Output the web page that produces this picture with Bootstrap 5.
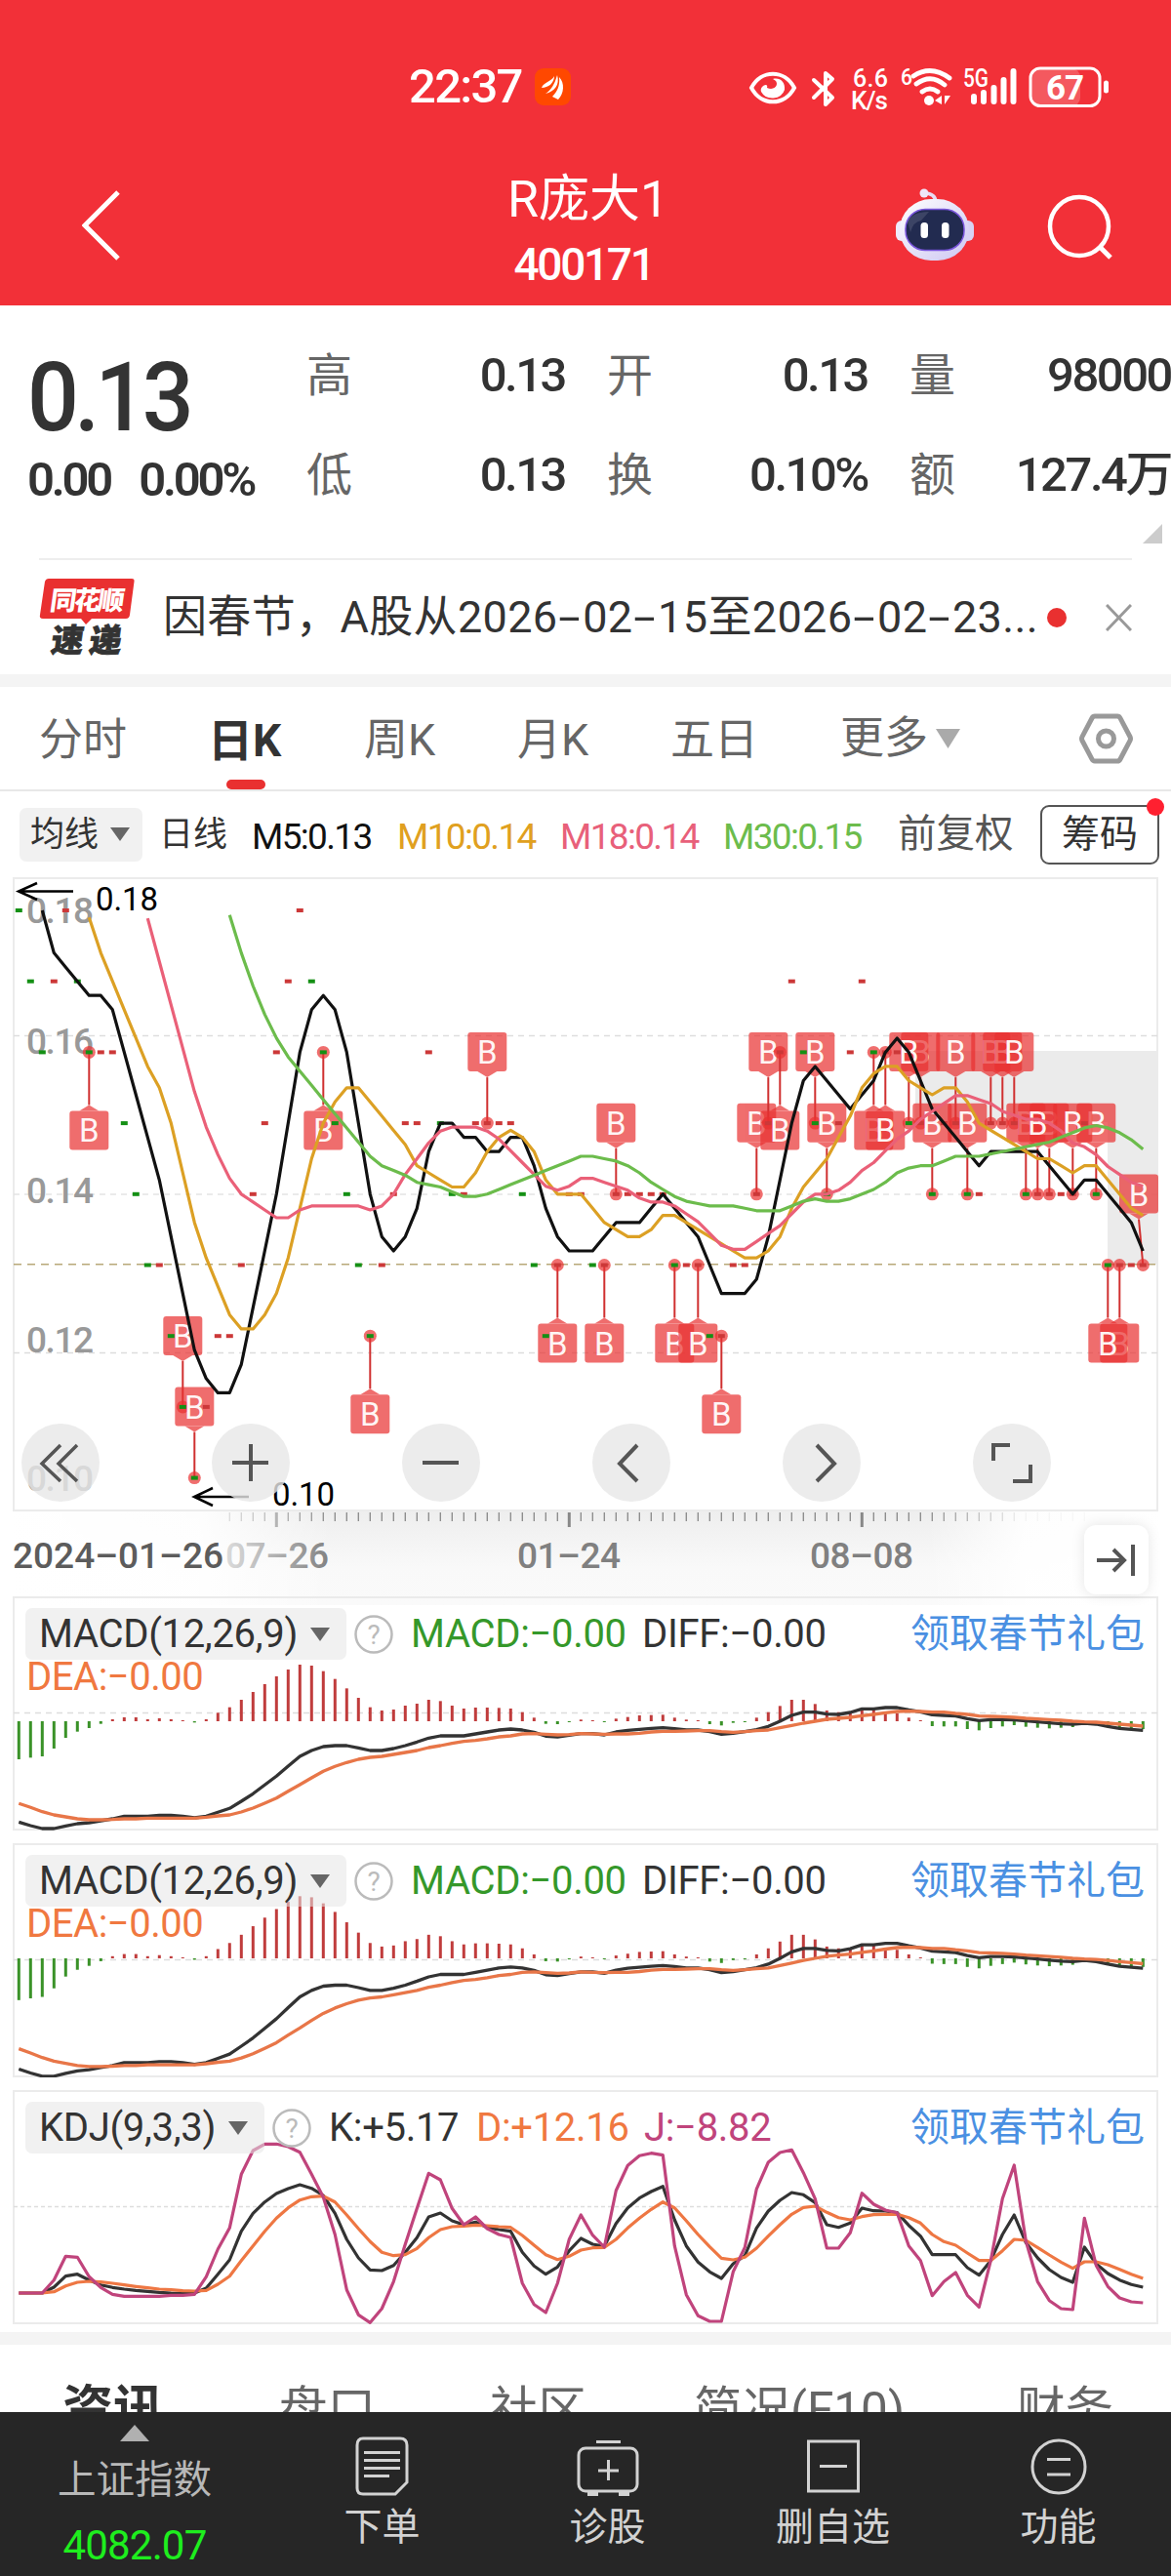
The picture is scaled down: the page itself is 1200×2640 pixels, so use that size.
<!DOCTYPE html>
<html lang="zh-CN">
<head>
  <meta charset="UTF-8">
  <meta name="viewport" content="width=device-width, initial-scale=1.0">
  <title>R庞大1 400171</title>
  <!-- Bootstrap CSS -->
  <link href="https://cdn.jsdelivr.net/npm/bootstrap@5.3.0/dist/css/bootstrap.min.css" rel="stylesheet">
  <style>
    body { width: 1200px; height: 2640px; margin: 0; overflow: hidden; background: #fff; color: #333; font-family: Roboto, "Noto Sans CJK SC", sans-serif; line-height: 1; white-space: nowrap; }
    svg { display: block; flex: none; }
    svg text { font-family: Roboto, "Noto Sans CJK SC", sans-serif; }
    .digits { font-weight: 500; letter-spacing: -.05em; }

    .app-head { height: 313px; background: #f23038; color: #fff; }
    .status-row { height: 90px; margin-top: 44px; padding-left: 419px; }
    .clock { font-size: 49px; line-height: 60px; letter-spacing: -.035em; width: 129px; }
    .status-icons { margin-left: 179px; }
    .title-row { height: 146px; padding: 0 60px 0 84px; margin-top: 16px; }
    .stock-name { font-size: 52px; height: 70px; line-height: 70px; }
    .stock-code { font-size: 46px; height: 50px; line-height: 50px; letter-spacing: -.05em; font-weight: 500; margin-top: 6px; }
    .title-mid { margin-left: 397px; width: 156px; padding-top: 20px; }
    .robot { margin-left: 242px; }
    .search-icon { margin-left: 75px; }

    .quote { height: 259px; padding-top: 20px; }
    .quote-left { width: 314px; padding-left: 28px; }
    .price { font-size: 98px; height: 108px; line-height: 108px; margin-top: 21px; transform: scaleX(.95); transform-origin: left; }
    .change { font-size: 49px; height: 60px; line-height: 60px; gap: 29px; letter-spacing: -.065em; }
    .quote-grid { display: grid; grid-template-columns: 265px 267px 268px; column-gap: 43px; grid-auto-rows: 102px; }
    .quote-grid > div { font-size: 49px; }
    .quote-grid .lbl { color: #666; font-size: 47px; }
    .corner { width: 0; height: 0; border-left: 20px solid transparent; border-bottom: 20px solid #ccc; margin: 0 9px 0 auto; }

    .news { height: 119px; margin: 0 40px; border-top: 2px solid #eee; }
    .news-text { font-size: 45px; margin-left: 27px; width: 907px; letter-spacing: .008em; }
    .news-text i { display: inline-block; width: .57em; text-align: center; font-style: normal; transform: scaleX(1.8); }
    .red-dot { width: 20px; height: 20px; background: #e93030; margin-left: -1px; }
    .band { height: 13px; background: #f4f4f4; }

    .period-tabs { height: 107px; border-bottom: 2px solid #e8e8e8; color: #666; font-size: 45px; padding-left: 40px; }
    .period-tabs > div { height: 106px; line-height: 110px; }
    .period-on { color: #333; font-weight: 700; font-size: 46px; position: relative; }
    .period-on::after { content: ""; position: absolute; left: 19px; bottom: 1px; width: 40px; height: 10px; border-radius: 5px; background: #e93030; }

    .ma-row { height: 88px; padding-left: 20px; font-size: 37px; }
    .chip { background: rgba(230, 230, 230, .55); border-radius: 7px; color: #333; }
    .ma-chip { width: 126px; height: 55px; padding-left: 11px; font-size: 35px; gap: 12px; }
    .ma-val { letter-spacing: -.045em; padding-top: 4px; }
    .chips-btn { width: 122px; height: 61px; border: 2px solid #555; border-radius: 9px; font-size: 39px; position: relative; }
    .chips-btn::after { content: ""; position: absolute; right: -7px; top: -9px; width: 18px; height: 18px; border-radius: 50%; background: #ff2030; }

    .panel { position: relative; margin: 0 13px; border: 2px solid #ebebeb; }
    .panel > svg { position: absolute; left: -15px; top: -2px; }
    .k-panel { height: 650px; }
    .tools { position: absolute; left: 7px; bottom: 8px; gap: 115px; }
    .tool-btn { width: 80px; height: 80px; background: rgba(231, 231, 231, .8); border-radius: 50%; }

    .axis { height: 87px; position: relative; }
    .end-btn { position: absolute; left: 1111px; top: 14px; width: 66px; height: 71px; background: #fff; border-radius: 12px; box-shadow: 0 0 14px rgba(0, 0, 0, .1); z-index: 2; }

    .sub-panel { height: 240px; margin-bottom: 13px; }
    .legend { position: relative; padding: 10px 12px 0 11px; font-size: 40px; letter-spacing: -.008em; }
    .legend > div { height: 53px; }
    .legend .chip { padding: 0 17px 0 14px; gap: 13px; }
    .legend .gift { color: #4a90e2; font-size: 40px; letter-spacing: 0; }
    .dea { position: relative; color: #f07840; font-size: 40px; padding-left: 12px; letter-spacing: -.012em; height: 36px; line-height: 36px; }
    .green { color: #35982a; }
    .orange { color: #f07840; }
    .pink { color: #c0447c; }

    .info-tabs { height: 69px; overflow: hidden; color: #666; font-size: 49.5px; }
    .info-tabs div { line-height: 134px; height: 134px; }

    .foot { height: 169px; background: #262626; color: #d2d2d2; font-size: 39px; }
    .foot-index { width: 276px; color: #b8b8b8; font-size: 39.5px; }
    .foot-cell { width: 231px; padding-top: 24px; }
    .foot-cell div { margin-top: 11px; }
    .foot-num { color: #1eee1e; font-size: 42px; letter-spacing: -.02em; }
  </style>
</head>
<body>
  <header class="app-head d-flex flex-column">
    <div class="status-row d-flex align-items-center">
      <div class="clock digits">22:37</div>
      <svg width="37" height="38" viewBox="0 0 37 38"><rect width="37" height="38" rx="9" fill="#ff4800"/><path d="M7 20C9 14 17 14 20 8C20 15 14 20 7 20ZM11 26C17 22 20 17 23 7C26 17 20 24 11 26ZM18 29C23 24 26 18 25 9C31 15 30 26 24 32Z" fill="#fff"/></svg>
      <svg class="status-icons" width="375" height="50" viewBox="0 0 375 50" fill="none" stroke="#fff">
        <!-- eye -->
        <path d="M6 26C16 7 40 7 50 26C40 45 16 45 6 26Z" stroke-width="4"/>
        <path d="M28 17C36 20 31 30 22 26C24 20 14 24 16 30A13 12 0 0 0 40 28C41 20 35 15 28 17Z" fill="#fff" stroke="none"/>
        <!-- bluetooth -->
        <path d="M70 18L89 36L82 43V11L89 17L70 36" stroke-width="4" stroke-linejoin="round" stroke-linecap="round"/>
        <!-- wifi -->
        <path d="M172 14Q190 2 209 16M175 22Q190 11 204 23M181 30Q189 24 197 30" stroke-width="4.800" stroke-linecap="round"/>
        <circle cx="188" cy="39" r="5" fill="#fff" stroke="none"/>
        <path d="M201 34v9l-7-4zM204 34v9l6-9z" fill="#fff" stroke="none"/>
        <!-- signal -->
        <path d="M234 35V40M244 31V40M254.500 26V40M264.500 18V40M274.500 9V40" stroke-width="6" stroke-linecap="round"/>
        <!-- battery -->
        <rect x="292" y="6" width="51" height="39" rx="9" fill="#fff" fill-opacity=".2" stroke="none"/>
        <rect x="292" y="6" width="71" height="38.500" rx="10" stroke-width="3"/>
        <path d="M369.500 21v8" stroke-width="5" stroke-linecap="round"/>
        <g fill="#fff" stroke="none">
          <text x="110" y="24.500" font-size="25" font-weight="500" textLength="36">6.6</text>
          <text x="108" y="47.500" font-size="26" font-weight="500" textLength="38">K/s</text>
          <text x="159" y="23" font-size="24" font-weight="500" textLength="12" lengthAdjust="spacingAndGlyphs">6</text>
          <text x="223" y="25" font-size="25" font-weight="500" textLength="26" lengthAdjust="spacingAndGlyphs">5G</text>
          <text x="308" y="38" font-size="35" font-weight="700" textLength="39">67</text>
        </g>
      </svg>
    </div>
    <div class="title-row d-flex align-items-start">
      <svg width="39" height="72" viewBox="0 0 39 72" style="margin-top: 45px"><path d="M37 2L3 36L37 70" fill="none" stroke="#fff" stroke-width="5"/></svg>
      <div class="title-mid text-center">
        <div class="stock-name">R庞大1</div>
        <div class="stock-code">400171</div>
      </div>
      <svg class="robot" width="80" height="75" viewBox="0 0 80 75" style="margin-top: 43px">
        <defs><linearGradient id="head" x1="0" y1="0" x2="1" y2="1"><stop offset="0" stop-color="#fff"/><stop offset="1" stop-color="#cdc6f2"/></linearGradient></defs>
        <path d="M29 5Q41 5 41 15" fill="none" stroke="#e8dcf4" stroke-width="3.500"/><circle cx="29" cy="5" r="4.500" fill="#efe6f8"/>
        <rect x="0" y="33" width="14" height="21" rx="6" fill="#eeeafc"/><rect x="66" y="33" width="14" height="21" rx="6" fill="#d8d2f4"/>
        <rect x="4" y="11" width="71" height="63" rx="32" fill="url(#head)"/>
        <rect x="10" y="21.500" width="60" height="42" rx="20" fill="#222b50" stroke="#7a56dc" stroke-width="1.500"/>
        <path d="M12 34Q17 24 34 24L26 33Q18 34 15 45Z" fill="#fff" opacity=".12"/>
        <rect x="25.500" y="35" width="7.500" height="16" rx="3.500" fill="#fff"/><rect x="47" y="35" width="7.500" height="16" rx="3.500" fill="#fff"/>
      </svg>
      <svg class="search-icon" width="70" height="70" viewBox="0 0 70 70" fill="none" stroke="#fff" stroke-width="4.500" style="margin-top: 49px"><circle cx="33" cy="33" r="30"/><path d="M54 54L65 65" stroke-width="5"/></svg>
    </div>
  </header>

  <section class="quote">
    <div class="d-flex">
      <div class="quote-left">
        <div class="price digits">0.13</div>
        <div class="change fw-semibold d-flex"><span>0.00</span><span>0.00%</span></div>
      </div>
      <div class="quote-grid">
        <div class="d-flex justify-content-between align-items-center"><span class="lbl">高</span><span class="digits">0.13</span></div>
        <div class="d-flex justify-content-between align-items-center"><span class="lbl">开</span><span class="digits">0.13</span></div>
        <div class="d-flex justify-content-between align-items-center"><span class="lbl">量</span><span class="digits">98000</span></div>
        <div class="d-flex justify-content-between align-items-center"><span class="lbl">低</span><span class="digits">0.13</span></div>
        <div class="d-flex justify-content-between align-items-center"><span class="lbl">换</span><span class="digits">0.10%</span></div>
        <div class="d-flex justify-content-between align-items-center"><span class="lbl">额</span><span class="digits">127.4万</span></div>
      </div>
    </div>
    <div class="corner"></div>
  </section>

  <section class="news d-flex align-items-center">
    <svg width="100" height="82" viewBox="0 0 100 82">
      <path d="M10 1H95Q98 1 97.500 4L93 38Q92.500 42 89 42H54L48 48L43 42H4Q0 42 1 38L6 4Q7 1 10 1Z" fill="#e93030"/>
      <g transform="skewX(-8)" font-weight="900">
        <text x="15" y="33" font-size="27" fill="#fff" textLength="76">同花顺</text>
        <text x="22" y="76.500" font-size="33" fill="#333" stroke="#333" stroke-width=".8" textLength="72">速递</text>
      </g>
    </svg>
    <div class="news-text">因春节，A股从2026<i>-</i>02<i>-</i>15至2026<i>-</i>02<i>-</i>23...</div>
    <div class="red-dot rounded-circle"></div>
    <svg class="ms-auto" width="27" height="28" viewBox="0 0 27 28"><path d="M1 1L26 27M26 1L1 27" stroke="#999" stroke-width="3"/></svg>
  </section>
  <div class="band"></div>

  <nav class="period-tabs d-flex">
    <div style="width: 173px">分时</div>
    <div class="period-on" style="width: 160px">日K</div>
    <div style="width: 157px">周K</div>
    <div style="width: 157px">月K</div>
    <div style="width: 174px">五日</div>
    <div class="d-flex align-items-center" style="width: 245px">更多<svg class="ms-2" width="25" height="20"><path d="M0 0H25L12.500 20Z" fill="#aaa"/></svg></div>
    <div class="d-flex align-items-center"><svg width="55" height="52" viewBox="0 0 55 52" fill="none" stroke="#999" stroke-width="5"><path d="M16 3H39Q41 3 42 5L52 24Q53 26 52 28L42 47Q41 49 39 49H16Q14 49 13 47L3 28Q2 26 3 24L13 5Q14 3 16 3Z"/><circle cx="27.500" cy="26" r="8"/></svg></div>
  </nav>

  <section class="ma-row d-flex align-items-center">
    <div class="chip ma-chip d-flex align-items-center">均线<svg width="20" height="14"><path d="M0 0H20L10 14Z" fill="#666"/></svg></div>
    <div style="width: 95px; margin-left: 17px; font-size: 35px">日线</div>
    <div class="ma-val" style="width: 149px; color: #111">M5:0.13</div>
    <div class="ma-val" style="width: 167px; color: #e0a020">M10:0.14</div>
    <div class="ma-val" style="width: 167px; color: #e8607a">M18:0.14</div>
    <div class="ma-val" style="width: 179px; color: #6cbc4c">M30:0.15</div>
    <div style="width: 146px; font-size: 39.500px; color: #555">前复权</div>
    <div class="chips-btn d-flex align-items-center justify-content-center">筹码</div>
  </section>

  <section class="panel k-panel">
    <svg id="kChart" width="1200" height="650" viewBox="0 899 1200 650"></svg>
    <div class="tools d-flex">
      <div class="tool-btn"><svg width="80" height="80" fill="none" stroke="#555" stroke-width="3.500"><path d="M40 22L21 41L40 59M57 22L38 41L57 59"/></svg></div>
      <div class="tool-btn"><svg width="80" height="80" fill="none" stroke="#555" stroke-width="4"><path d="M21 40H58M40 21V59"/></svg></div>
      <div class="tool-btn"><svg width="80" height="80" fill="none" stroke="#555" stroke-width="4"><path d="M21 40H58"/></svg></div>
      <div class="tool-btn"><svg width="80" height="80" fill="none" stroke="#555" stroke-width="4"><path d="M46 22L28 41L46 59"/></svg></div>
      <div class="tool-btn"><svg width="80" height="80" fill="none" stroke="#555" stroke-width="4"><path d="M35 22L53 41L35 59"/></svg></div>
      <div class="tool-btn"><svg width="80" height="80" fill="none" stroke="#555" stroke-width="4"><path d="M21 38V22H38M41 59H59V42"/></svg></div>
    </div>
  </section>

  <section class="axis">
    <svg id="axisChart" width="1200" height="96" viewBox="0 1549 1200 96"></svg>
    <div class="end-btn d-flex align-items-center justify-content-center">
      <svg width="40" height="36" fill="none" stroke="#555" stroke-width="4"><path d="M0 18H28M17 7L28 18L17 29M37 2V34"/></svg>
    </div>
  </section>

  <section class="panel sub-panel">
    <svg id="macd1" width="1200" height="240" viewBox="0 1636 1200 240"></svg>
    <div class="legend d-flex">
      <div class="chip d-flex align-items-center" style="width: 329px"><span class="legend-name">MACD(12,26,9)</span><svg width="20" height="14"><path d="M0 0H20L10 14Z" fill="#666"/></svg></div>
      <div class="d-flex align-items-center ms-2"><svg width="40" height="40"><circle cx="20" cy="20" r="18.500" fill="none" stroke="#bbb" stroke-width="2.500"/><text x="20" y="30" font-size="28" fill="#bbb" text-anchor="middle">?</text></svg></div>
      <div class="green d-flex align-items-center" style="width: 237px; margin-left: 18px">MACD:−0.00</div>
      <div class="d-flex align-items-center">DIFF:−0.00</div>
      <div class="gift d-flex align-items-center ms-auto">领取春节礼包</div>
    </div>
    <div class="dea">DEA:−0.00</div>
  </section>

  <section class="panel sub-panel">
    <svg id="macd2" width="1200" height="240" viewBox="0 1889 1200 240"></svg>
    <div class="legend d-flex">
      <div class="chip d-flex align-items-center" style="width: 329px"><span class="legend-name">MACD(12,26,9)</span><svg width="20" height="14"><path d="M0 0H20L10 14Z" fill="#666"/></svg></div>
      <div class="d-flex align-items-center ms-2"><svg width="40" height="40"><circle cx="20" cy="20" r="18.500" fill="none" stroke="#bbb" stroke-width="2.500"/><text x="20" y="30" font-size="28" fill="#bbb" text-anchor="middle">?</text></svg></div>
      <div class="green d-flex align-items-center" style="width: 237px; margin-left: 18px">MACD:−0.00</div>
      <div class="d-flex align-items-center">DIFF:−0.00</div>
      <div class="gift d-flex align-items-center ms-auto">领取春节礼包</div>
    </div>
    <div class="dea">DEA:−0.00</div>
  </section>

  <section class="panel sub-panel mb-2">
    <svg id="kdj" width="1200" height="240" viewBox="0 2142 1200 240"></svg>
    <div class="legend d-flex">
      <div class="chip d-flex align-items-center" style="width: 245px"><span class="legend-name">KDJ(9,3,3)</span><svg width="20" height="14"><path d="M0 0H20L10 14Z" fill="#666"/></svg></div>
      <div class="d-flex align-items-center ms-2"><svg width="40" height="40"><circle cx="20" cy="20" r="18.500" fill="none" stroke="#bbb" stroke-width="2.500"/><text x="20" y="30" font-size="28" fill="#bbb" text-anchor="middle">?</text></svg></div>
      <div class="d-flex align-items-center" style="width: 151px; margin-left: 18px">K:+5.17</div>
      <div class="orange d-flex align-items-center" style="width: 172px">D:+12.16</div>
      <div class="pink d-flex align-items-center">J:−8.82</div>
      <div class="gift d-flex align-items-center ms-auto">领取春节礼包</div>
    </div>
  </section>
  <div class="band"></div>

  <nav class="info-tabs d-flex">
    <div class="fw-bold" style="width: 286px; padding-left: 64px; font-size: 52px; color: #333">资讯</div>
    <div style="width: 216px">盘口</div>
    <div style="width: 209px">社区</div>
    <div style="width: 331px">简况(F10)</div>
    <div>财务</div>
  </nav>

  <footer class="foot d-flex">
    <div class="foot-index d-flex flex-column align-items-center">
      <svg width="30" height="17" style="margin-top: 13px"><path d="M0 17L15 0L30 17Z" fill="#b0b0b0"/></svg>
      <div style="margin-top: 20px">上证指数</div>
      <div class="foot-num" style="margin-top: 26px">4082.07</div>
    </div>
    <div class="foot-cell d-flex flex-column align-items-center">
      <svg width="64" height="64" fill="none" stroke="#d2d2d2" stroke-width="3"><path d="M12 3H50Q57 3 57 10V48L45 60H12Q6 60 6 54V10Q6 3 12 3Z"/><path d="M13 17.500H50M13 25.500H50M13 33.500H50M13 41.500H39"/></svg>
      <div>下单</div>
    </div>
    <div class="foot-cell d-flex flex-column align-items-center">
      <svg width="64" height="64" fill="none" stroke="#d2d2d2" stroke-width="3"><rect x="2" y="13" width="60" height="44" rx="7"/><path d="M20 6.500H45M22 36H43M32.500 25V46"/><path d="M11 60H22M43 60H54" stroke-width="4"/></svg>
      <div>诊股</div>
    </div>
    <div class="foot-cell d-flex flex-column align-items-center">
      <svg width="64" height="64" fill="none" stroke="#d2d2d2" stroke-width="3"><rect x="6.500" y="6" width="51" height="51"/><path d="M18 31.500H46"/></svg>
      <div>删自选</div>
    </div>
    <div class="foot-cell d-flex flex-column align-items-center">
      <svg width="64" height="64" fill="none" stroke="#d2d2d2" stroke-width="3"><circle cx="32" cy="32" r="27"/><path d="M20 24.500H44M20 40H44"/></svg>
      <div>功能</div>
    </div>
  </footer>

  <script>
    // closing prices in cents; the first 11 come before the visible window
    const before = [29, 28, 27, 26, 25, 24, 23, 22, 21, 20, 19];
    const closes = [18, 17, 16, 17, 18, 17, 16, 16, 16, 15, 14, 13, 13, 12, 11, 10, 11, 12, 12, 13, 14, 15, 16, 17, 18, 17, 16, 15, 14, 13, 12, 13, 14, 15, 15, 16, 15, 14, 14, 15, 15, 15, 15, 14, 13, 12, 13, 14, 14, 13, 13, 14, 14, 14, 14, 14, 13, 13, 13, 12, 12, 13, 13, 14, 15, 16, 17, 16, 15, 14, 15, 16, 17, 16, 16, 16, 15, 15, 14, 15, 15, 14, 14, 15, 15, 15, 14, 14, 14, 14, 14, 15, 14, 13, 13, 13, 13];
    const all = before.concat(closes);

    const px = i => 19.3 + 12 * i;
    const py = v => 933 + (18 - v) * 72.7;
    const line = (pts, color, w) => `<polyline points="${pts.map(p => p[0].toFixed(1) + ',' + p[1].toFixed(1)).join(' ')}" fill="none" stroke="${color}" stroke-width="${w}" stroke-linejoin="round"/>`;
    const dashed = (y, color, d) => `<path d="M14 ${y}H1187" stroke="${color}" stroke-width="1.5" stroke-dasharray="${d}"/>`;

    function average(n, first, color) {
      const pts = [];
      for (let i = first; i < closes.length; i++) {
        const part = all.slice(i + 12 - n, i + 12);
        pts.push([px(i), py(part.reduce((a, b) => a + b, 0) / n)]);
      }
      return line(pts, color, 3.2);
    }

    function marker(i, up) {
      const x = px(i), y = py(closes[i]), bx = Math.min(x, 1167), s = up ? -1 : 1;
      const top = up ? y - 93 : y + 60;
      return `<g fill="#e93030"><path d="M${x} ${y}L${bx} ${y + s * (up ? 47 : 54)}" stroke="#d03030" stroke-width="2"/>
        <circle cx="${x}" cy="${y}" r="6.500" opacity=".7"/>
        <g opacity=".7"><rect x="${bx - 20}" y="${top}" width="40" height="40" rx="3"/><path d="M${bx - 10} ${up ? top + 40 : top}h20l-10 ${up ? 6 : -6}Z"/></g>
        <text x="${bx}" y="${top + 32}" font-size="33" fill="#fff" fill-opacity=".95" text-anchor="middle">B</text></g>`;
    }

    let k = '<path d="M938 1077H1187V1296H1135V1150H938Z" fill="#ebebeb"/>';
    k += dashed(1061.5, '#ddd', '6 5') + dashed(1224, '#e4e4e4', '6 5') + dashed(1386.5, '#ddd', '6 5') + dashed(1295.8, '#b8a878', '8 6');
    [[0.18, 946], [0.16, 1079.5], [0.14, 1232.5], [0.12, 1386], ['0.10', 1528]].forEach(([t, y]) => {
      k += `<text x="27" y="${y}" font-size="37" font-weight="500" fill="#999" textLength="69">${t}</text>`;
    });
    [14, 15, 40, 51, 63, 64, 68, 69, 77, 76, 80, 83, 84, 85, 78, 81, 86, 88, 87, 92, 90, 96].forEach(i => k += marker(i, true));
    [6, 26, 30, 46, 50, 56, 58, 60, 65, 73, 74, 94, 93].forEach(i => k += marker(i, false));
    closes.forEach((c, i) => {
      const down = i === 0 || c < closes[i - 1];
      k += `<rect x="${px(i) - 3.5}" y="${py(c) - 2}" width="7" height="4" fill="${down ? '#149014' : '#cc3838'}"/>`;
    });
    k += average(5, 2, '#111') + average(10, 6, '#dca024') + average(18, 11, '#ea6078') + average(30, 18, '#6cbc4c');
    k += `<g stroke="#000" stroke-width="2.500" fill="none"><path d="M75 913.500H19M38 905L19 913.500L38 922M255 1534H199M218 1525L199 1534L218 1543"/></g>
      <text x="98" y="933" font-size="33" textLength="64">0.18</text><text x="279" y="1543" font-size="33" textLength="64">0.10</text>`;
    document.getElementById('kChart').innerHTML = k;

    // time axis with the faded left end
    let a = `<defs><linearGradient id="fall" x1="0" y1="0" x2="0" y2="1"><stop offset="0" stop-color="#eee"/><stop offset=".6" stop-color="#f9f9f9"/><stop offset="1" stop-color="#fafafa"/></linearGradient>
      <linearGradient id="fade"><stop offset="0" stop-color="#fff"/><stop offset=".6" stop-color="#fff" stop-opacity=".9"/><stop offset="1" stop-color="#fff" stop-opacity="0"/></linearGradient></defs>
      <rect x="14" y="1549" width="1173" height="96" fill="url(#fall)"/>`;
    for (let i = 18; i < 92; i++) {
      const major = i === 22 || i === 47 || i === 72;
      a += `<path d="M${px(i)} 1550v${major ? 15 : 9}" stroke="#888" stroke-width="${major ? 3 : 1.3}"/>`;
    }
    [['07-26', 231], ['01-24', 530], ['08-08', 830]].forEach(([t, x]) => {
      a += `<text x="${x}" y="1607" font-size="37" fill="#808080" font-weight="500" textLength="106">${t.replace('-', '–')}</text>`;
    });
    a += `<rect x="0" y="1549" width="340" height="96" fill="url(#fade)"/><rect x="950" y="1549" width="250" height="96" fill="url(#fade)" transform="matrix(-1 0 0 1 2150 0)"/>
      <text x="13" y="1607" font-size="37" fill="#5c5c5c" font-weight="500" textLength="216">2024–01–26</text>`;
    document.getElementById('axisChart').innerHTML = a;

    // MACD histogram and lines, in thirds of a pixel from the zero line
    const bars = [-117, -112, -108, -84, -51, -32, -21, -8, 6, 12, 12, 6, 9, 6, 2, -4, 6, 26, 43, 66, 90, 114, 138, 159, 174, 171, 154, 130, 101, 72, 43, 33, 36, 48, 54, 66, 62, 48, 39, 42, 42, 41, 39, 28, 11, -8, -9, -3, 5, 2, -2, 8, 13, 18, 19, 20, 11, 5, 2, -9, -13, -5, -2, 11, 28, 47, 66, 66, 53, 33, 28, 28, 36, 36, 26, 24, 11, 2, -15, -16, -16, -24, -28, -21, -16, -12, -17, -20, -22, -20, -18, -6, -8, -14, -20, -23, -24];
    const diff = [742, 753, 762, 762, 754, 747, 744, 738, 732, 724, 724, 724, 721, 721, 724, 729, 724, 712, 700, 678, 655, 628, 601, 570, 540, 522, 510, 507, 507, 514, 522, 522, 516, 507, 496, 484, 477, 477, 477, 471, 465, 459, 456, 459, 466, 478, 480, 475, 470, 470, 474, 465, 460, 457, 454, 452, 455, 459, 459, 464, 472, 469, 464, 458, 448, 432, 414, 404, 404, 410, 411, 405, 394, 394, 390, 390, 397, 403, 412, 414, 416, 424, 430, 427, 427, 428, 431, 434, 437, 440, 441, 438, 441, 448, 454, 457, 460];
    const dea = [685, 697, 710, 720, 726, 732, 735, 735, 734, 732, 732, 730, 730, 730, 730, 730, 727, 723, 720, 711, 699, 684, 668, 647, 627, 606, 586, 571, 559, 549, 543, 540, 534, 528, 522, 513, 507, 500, 494, 491, 486, 480, 477, 471, 470, 472, 474, 473, 470, 471, 472, 471, 471, 469, 465, 463, 463, 462, 461, 461, 464, 466, 464, 461, 459, 452, 445, 438, 432, 426, 423, 420, 415, 411, 406, 402, 401, 402, 404, 404, 408, 411, 416, 417, 418, 420, 423, 425, 427, 429, 432, 434, 435, 438, 441, 444, 447];

    function macd(id, zero, mid, scale) {
      let s = dashed(mid, '#ddd', '6 5');
      bars.forEach((b, i) => {
        const h = Math.max(Math.abs(b) * scale / 3, 1);
        s += `<rect x="${px(i) - 1.5}" y="${b > 0 ? zero - h : zero}" width="3" height="${h}" fill="${b > 0 ? '#c03c3c' : '#3a9228'}"/>`;
      });
      const y = v => zero + (v - 432) * scale / 3;
      s += line(diff.map((v, i) => [px(i), y(v)]), '#333', 3.3) + line(dea.map((v, i) => [px(i), y(v)]), '#e87648', 3.3);
      document.getElementById(id).innerHTML = s;
    }
    macd('macd1', 1764, 1755.5, 1);
    macd('macd2', 2007, 2008.5, 1.098);

    const kLine = [690, 690, 690, 672, 638, 632, 650, 665, 673, 678, 682, 685, 688, 690, 691, 690, 675, 632, 588, 500, 445, 410, 384, 369, 357, 368, 390, 445, 525, 582, 619, 621, 605, 565, 520, 456, 444, 468, 480, 472, 488, 495, 500, 565, 607, 632, 610, 560, 522, 540, 546, 476, 428, 398, 378, 362, 465, 545, 595, 625, 645, 600, 575, 490, 438, 405, 381, 388, 412, 480, 488, 475, 429, 437, 438, 443, 482, 515, 572, 572, 572, 612, 635, 590, 510, 450, 535, 582, 618, 642, 657, 549, 600, 630, 650, 664, 672];
    const dLine = [690, 690, 690, 686, 668, 657, 654, 656, 660, 665, 670, 674, 678, 680, 683, 684, 682, 663, 638, 590, 545, 500, 460, 428, 404, 394, 392, 410, 450, 492, 532, 565, 575, 572, 553, 520, 495, 486, 484, 481, 483, 486, 488, 513, 543, 572, 587, 577, 558, 551, 550, 525, 490, 460, 433, 410, 428, 468, 510, 548, 583, 588, 580, 552, 515, 480, 448, 427, 423, 442, 458, 465, 455, 449, 448, 448, 458, 475, 510, 532, 543, 567, 590, 590, 560, 525, 528, 550, 573, 595, 614, 594, 594, 603, 617, 632, 645];
    const jLine = [690, 690, 690, 650, 577, 580, 640, 673, 694, 700, 700, 700, 700, 697, 697, 694, 640, 555, 490, 325, 252, 232, 232, 240, 257, 325, 395, 510, 680, 757, 781, 738, 655, 540, 430, 322, 342, 430, 480, 456, 492, 510, 519, 660, 725, 750, 660, 525, 450, 512, 549, 375, 298, 268, 260, 266, 545, 695, 760, 777, 777, 625, 550, 370, 288, 258, 250, 320, 400, 552, 552, 505, 383, 417, 435, 443, 545, 590, 698, 655, 627, 697, 733, 590, 400, 297, 530, 655, 713, 738, 741, 460, 605, 670, 705, 717, 720];
    const ky = arr => arr.map((v, i) => [px(i), 2120 + v / 3]);
    document.getElementById('kdj').innerHTML = dashed(2261.5, '#ddd', '4 3') + line(ky(kLine), '#333', 3.2) + line(ky(dLine), '#ee7743', 3.2) + line(ky(jLine), '#c0447c', 3.2);
  </script>
  <!-- Bootstrap JS bundle -->
  <script src="https://cdn.jsdelivr.net/npm/bootstrap@5.3.0/dist/js/bootstrap.bundle.min.js"></script>
</body>
</html>
